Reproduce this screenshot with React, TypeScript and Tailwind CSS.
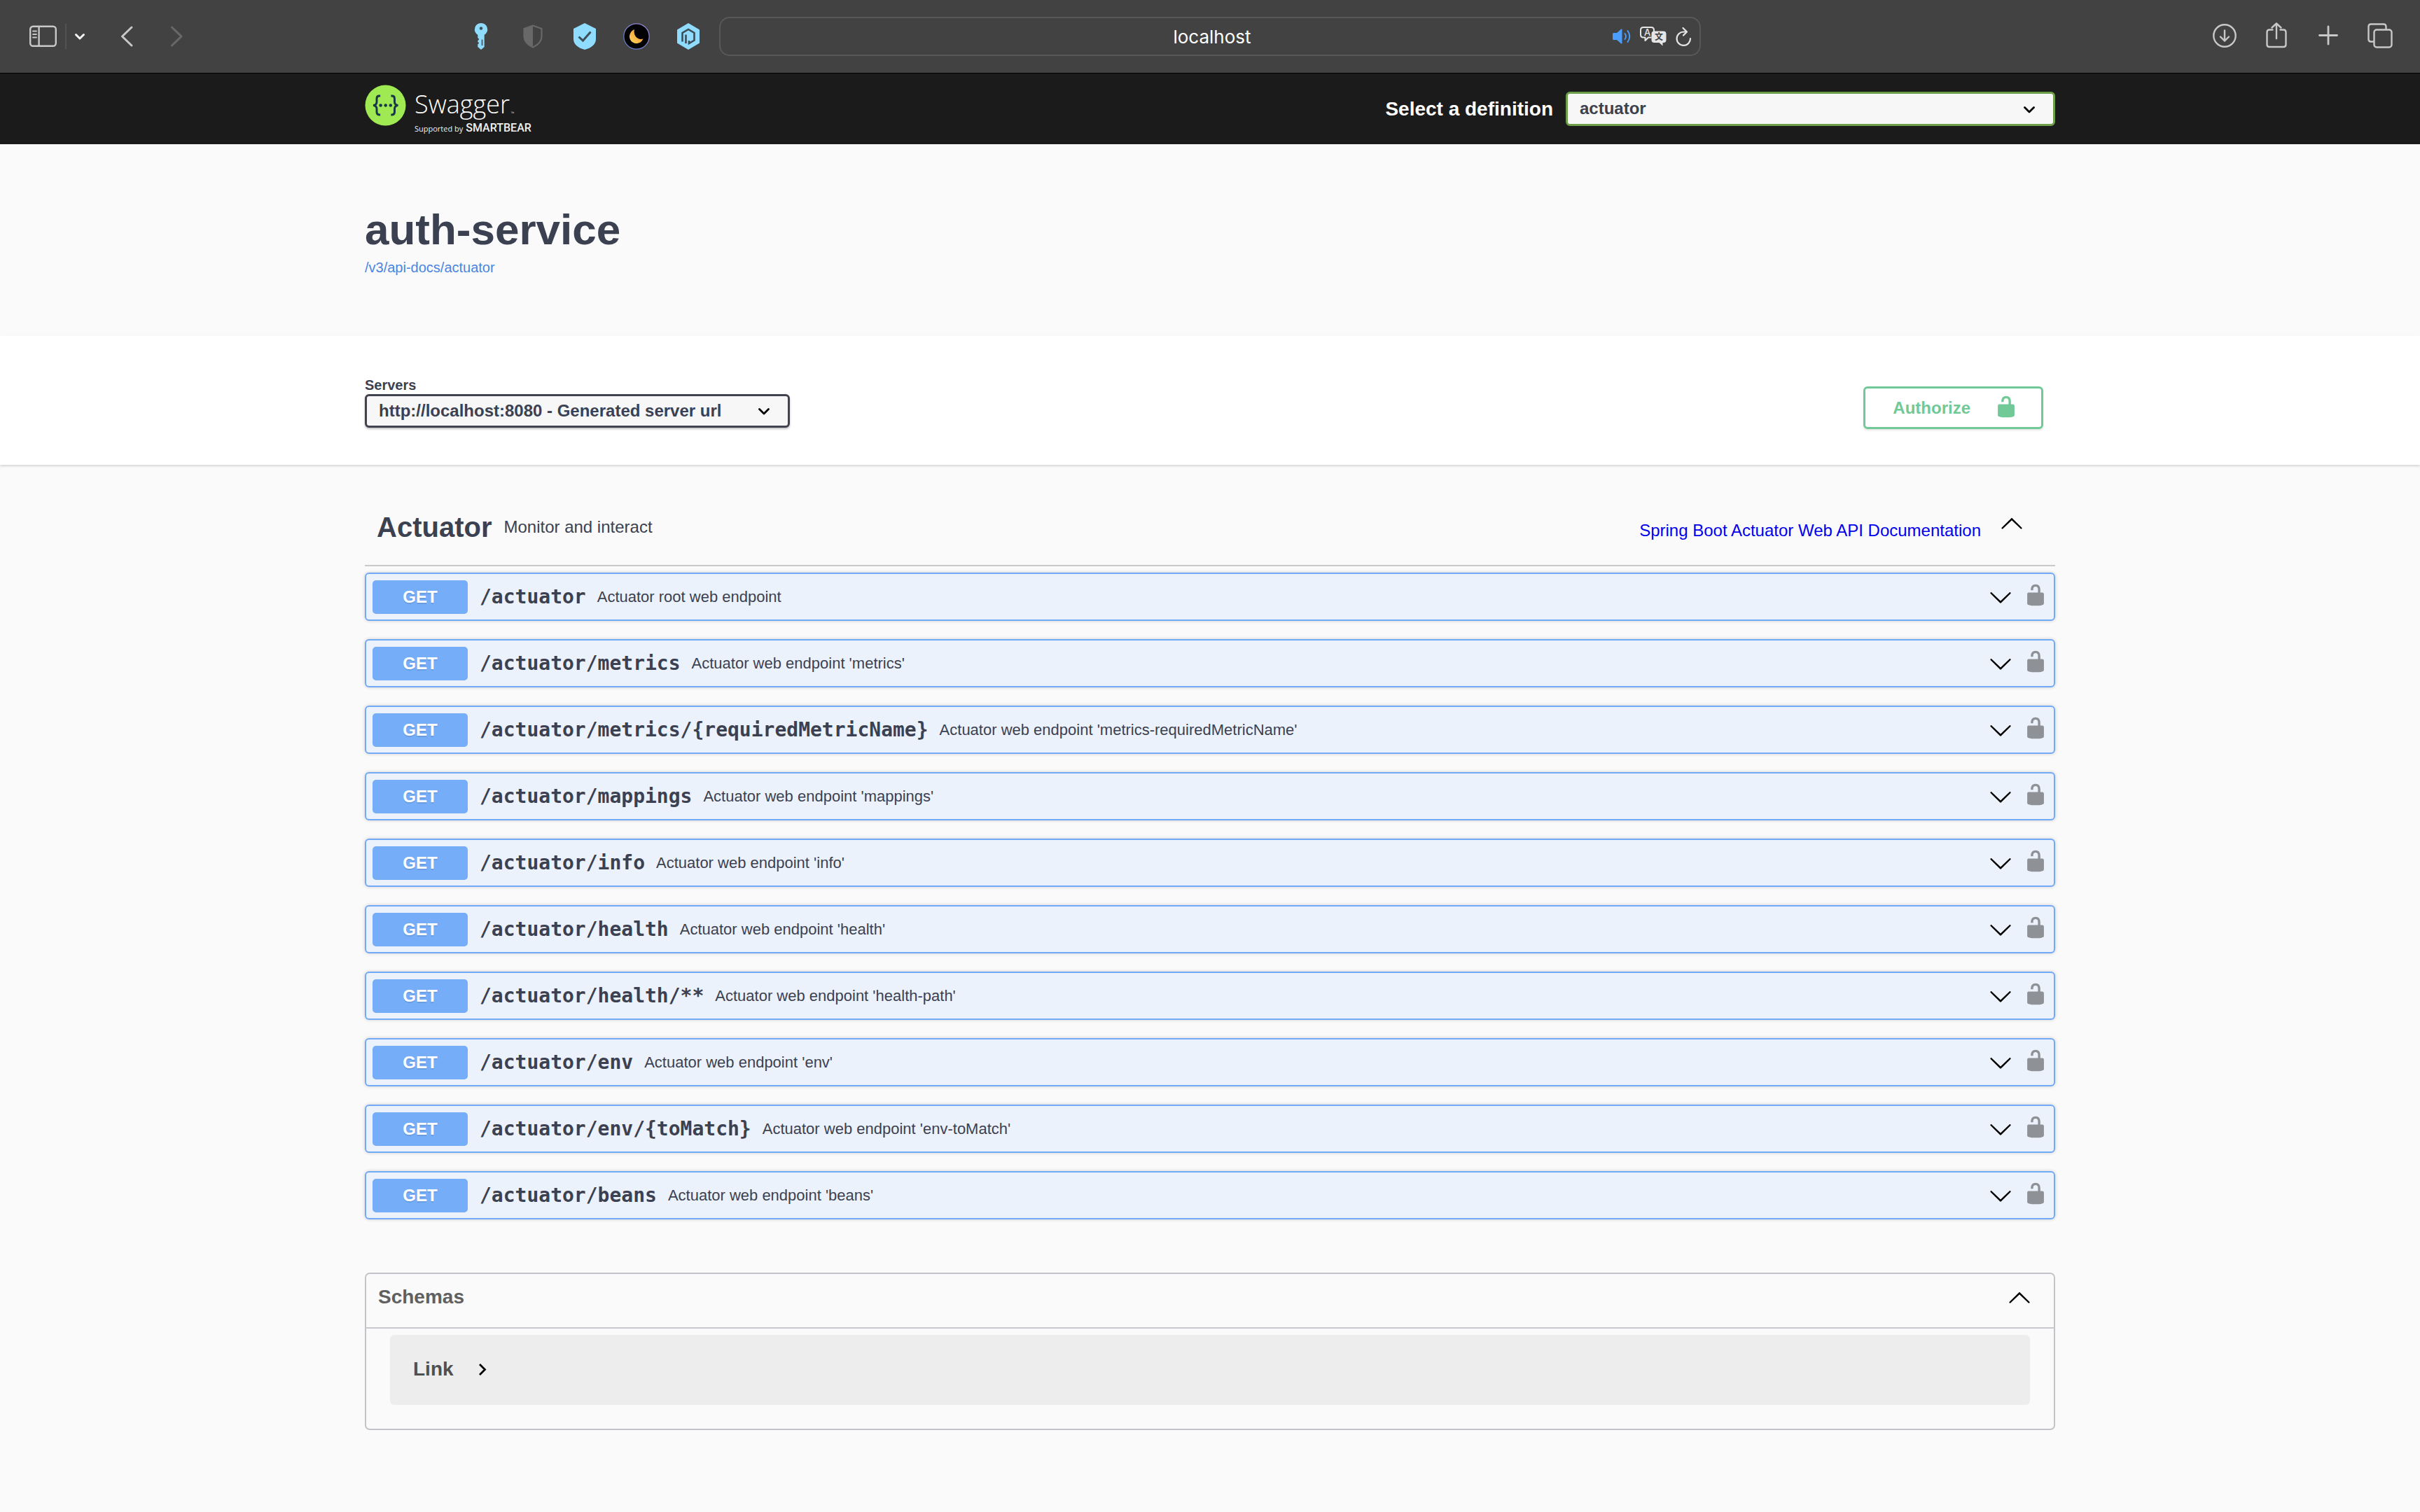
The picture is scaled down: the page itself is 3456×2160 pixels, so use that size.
import type { ReactNode } from 'react';

type Endpoint = { path: string; summary: string };

const endpoints: Endpoint[] = [
  { path: '/actuator', summary: 'Actuator root web endpoint' },
  { path: '/actuator/metrics', summary: "Actuator web endpoint 'metrics'" },
  { path: '/actuator/metrics/{requiredMetricName}', summary: "Actuator web endpoint 'metrics-requiredMetricName'" },
  { path: '/actuator/mappings', summary: "Actuator web endpoint 'mappings'" },
  { path: '/actuator/info', summary: "Actuator web endpoint 'info'" },
  { path: '/actuator/health', summary: "Actuator web endpoint 'health'" },
  { path: '/actuator/health/**', summary: "Actuator web endpoint 'health-path'" },
  { path: '/actuator/env', summary: "Actuator web endpoint 'env'" },
  { path: '/actuator/env/{toMatch}', summary: "Actuator web endpoint 'env-toMatch'" },
  { path: '/actuator/beans', summary: "Actuator web endpoint 'beans'" },
];

function Container({ className = '', children }: { className?: string; children: ReactNode }) {
  return <div className={`mx-auto w-full max-w-[2482px] px-[34px] ${className}`}>{children}</div>;
}

function ArrowDown() {
  return (
    <svg className="size-[34px] shrink-0" viewBox="0 0 20 20" fill="#000" aria-hidden="true">
      <path d="M17.418 6.109c.272-.268.709-.268.979 0s.271.701 0 .969l-7.908 7.83c-.27.268-.707.268-.979 0l-7.908-7.83c-.27-.268-.27-.701 0-.969.271-.268.709-.268.979 0L10 13.25l7.418-7.141z" />
    </svg>
  );
}

function ArrowUp() {
  return (
    <svg className="size-[34px] shrink-0" viewBox="0 0 20 20" fill="#000" aria-hidden="true">
      <path d="M17.418 14.908c.272.268.709.268.979 0s.271-.701 0-.969l-7.908-7.83c-.27-.268-.707-.268-.979 0l-7.908 7.83c-.27.268-.27.701 0 .969.271.268.709.268.979 0L10 7.767l7.418 7.141z" />
    </svg>
  );
}

function Unlocked() {
  return (
    <svg className="size-[34px] shrink-0" viewBox="0 0 20 20" fill="currentColor" aria-hidden="true">
      <path d="M15.8 8H14V5.6C14 2.703 12.665 1 10 1 7.334 1 6 2.703 6 5.6V6h2v-.801C8 3.754 8.797 3 10 3c1.203 0 2 .754 2 2.199V8H4c-.553 0-1 .646-1 1.199V17c0 .549.428 1.139.951 1.307l1.197.387C5.672 18.861 6.55 19 7.1 19h5.8c.549 0 1.428-.139 1.951-.307l1.196-.387c.524-.167.953-.757.953-1.306V9.199C17 8.646 16.352 8 15.8 8z" />
    </svg>
  );
}

function SelectArrow() {
  return (
    <svg
      className="pointer-events-none absolute top-1/2 right-[28px] -mt-1 h-[10px] w-[18px]"
      viewBox="0 0 18 10"
      fill="none"
      stroke="#000"
      strokeWidth="2.8"
      aria-hidden="true"
    >
      <path d="M2.500 1.500L9 8l6.500-6.500" strokeLinejoin="round" strokeLinecap="round" />
    </svg>
  );
}

function BrowserBar() {
  return (
    <div className="grid h-[105px] grid-cols-[1fr_minmax(0,1402px)_1fr] items-center border-b border-black bg-[#424242] text-[#c8c8c8]">
      <div className="flex items-center pr-6 pl-[41px]">
        <button aria-label="Show sidebar">
          <svg className="h-8 w-[42px]" viewBox="0 0 42 32" fill="none" stroke="currentColor" strokeWidth="2.4">
            <rect x="2.2" y="1.8" width="36.6" height="28" rx="4" />
            <path d="M14.6 2v28" />
            <path d="M6 8.5h5M6 13h5M6 17.5h5" strokeWidth="1.8" strokeLinecap="round" />
          </svg>
        </button>
        <span className="ml-2.5 h-9 w-0.5 bg-[#525252]" />
        <button aria-label="Tab groups" className="ml-2.5">
          <svg className="h-[14px] w-[18px]" viewBox="0 0 18 14" fill="none" stroke="#f4f4f4" strokeWidth="3" strokeLinecap="round" strokeLinejoin="round">
            <path d="M3.5 4.5l5.5 5.5 5.5-5.5" />
          </svg>
        </button>
        <button aria-label="Back" className="ml-12">
          <svg className="h-[34px] w-[22px]" viewBox="0 0 22 34" fill="none" stroke="currentColor" strokeWidth="3" strokeLinecap="round" strokeLinejoin="round">
            <path d="M17 4L3.500 17l13.500 13" />
          </svg>
        </button>
        <button aria-label="Forward" className="ml-12 text-[#686868]">
          <svg className="h-[34px] w-[22px]" viewBox="0 0 22 34" fill="none" stroke="currentColor" strokeWidth="3" strokeLinecap="round" strokeLinejoin="round">
            <path d="M4.500 4L18 17 4.500 30" />
          </svg>
        </button>
        <div className="ml-auto flex items-center gap-[34px]">
          <button aria-label="Passwords">
            <svg className="size-10" viewBox="0 0 40 40">
              <path d="M20 1a9 9 0 0 0-4.700 16.700V22l2 2-2 2.200v1.600l2 1.700-2 1.800V35l4.700 4 4.700-4V17.700A9 9 0 0 0 20 1z" fill="#8fdcff" />
              <circle cx="20" cy="8.500" r="2.200" fill="#3d4f58" />
              <path d="M21.500 24.500v8.500" stroke="#3d4f58" strokeWidth="1.600" />
            </svg>
          </button>
          <button aria-label="Privacy report">
            <svg className="size-10" viewBox="0 0 40 40">
              <path d="M20 4.500l12.500 4.500v11c0 7.500-5 12-12.500 15.500C12.500 32 7.500 27.500 7.500 20V9z" fill="none" stroke="#686868" strokeWidth="2.200" strokeLinejoin="round" />
              <path d="M20 4v32C12.500 32.500 7 27.500 7 20V9z" fill="#686868" />
            </svg>
          </button>
          <button aria-label="Protection">
            <svg className="size-10" viewBox="0 0 40 40">
              <path d="M20 1l16 8v15c0 8-8 13-16 15C12 37 4 32 4 24V9z" fill="#8fdcff" />
              <path d="M11.500 20.500l6 5.500 11-12.500" fill="none" stroke="#3f4f57" strokeWidth="3" />
            </svg>
          </button>
          <button aria-label="Night mode">
            <svg className="size-10" viewBox="0 0 40 40">
              <defs>
                <linearGradient id="ring" x1="0" y1="1" x2="1" y2="0">
                  <stop offset="0" stopColor="#5f7fd0" />
                  <stop offset="1" stopColor="#a78bdc" />
                </linearGradient>
                <linearGradient id="moon" x1="0" y1="1" x2="1" y2="0">
                  <stop offset="0" stopColor="#ffd75e" />
                  <stop offset="1" stopColor="#ef8b2c" />
                </linearGradient>
              </defs>
              <circle cx="20" cy="20" r="18.200" fill="#020204" stroke="url(#ring)" strokeWidth="1.200" />
              <path d="M17 10c-6 2.500-8.500 9-6 14.500 3.500 7.500 15 7.500 18.500-1-8 2.500-14.500-5-12.500-13.500z" fill="url(#moon)" />
            </svg>
          </button>
          <button aria-label="Extension">
            <svg className="size-10" viewBox="0 0 40 40">
              <path d="M20 1l16 9.500v19L20 39 4 29.500v-19z" fill="#8fdcff" />
              <path d="M11.500 27.500V15l8.500-5 8.500 5v10.500l-7.500 4.500v-4" fill="none" stroke="#3c4d58" strokeWidth="2.600" />
              <path d="M16.500 17.500v12.500" stroke="#3c4d58" strokeWidth="2.600" />
            </svg>
          </button>
        </div>
      </div>

      <div className="flex h-14 items-center rounded-[15px] border-2 border-[#585858] pr-2.5 pl-[132px]">
        <input
          aria-label="Address"
          defaultValue="localhost"
          className="min-w-0 flex-1 bg-transparent pt-0.5 text-center font-[Inter,sans-serif] text-[26px] leading-8 text-white outline-none"
        />
        <div className="flex items-center gap-2.5">
          <button aria-label="Mute tab">
            <svg className="h-[26px] w-[30px]" viewBox="0 0 30 26">
              <path d="M2 9.500q0-1.500 1.500-1.500H8l6-5.300q1.500-1 1.500.8v19q0 1.800-1.500.8L8 18H3.500Q2 18 2 16.500z" fill="#4c9dfc" />
              <path d="M19.500 9q3 4 0 8M23.500 5q5.500 8 0 16" fill="none" stroke="#4c9dfc" strokeWidth="1.900" strokeLinecap="round" />
            </svg>
          </button>
          <button aria-label="Translate">
            <svg className="h-[30px] w-10" viewBox="0 0 40 30">
              <path d="M17.500 16.500H13l-4.500 4.500v-4.500H6q-4 0-4-4V6q0-4 4-4h11q4 0 4 4v2" fill="none" stroke="#e6e6e6" strokeWidth="2" strokeLinejoin="round" />
              <path d="M21.500 7.500h13q4 0 4 4V20q0 4-4 4H33.500v4.500L28.500 24h-7q-4 0-4-4v-8.500q0-4 4-4z" fill="#e6e6e6" />
              <text x="11.500" y="14" textAnchor="middle" fontSize="13" fontWeight="500" fill="#e6e6e6" fontFamily="Inter, sans-serif">A</text>
              <text x="28" y="20" textAnchor="middle" fontSize="12" fontWeight="700" fill="#404040" fontFamily="'Noto Sans CJK SC', sans-serif">文</text>
            </svg>
          </button>
          <button aria-label="Reload">
            <svg className="h-7 w-[26px]" viewBox="0 0 26 28" fill="none" stroke="#e6e6e6" strokeWidth="2.200" strokeLinecap="round" strokeLinejoin="round">
              <path d="M17 7.500H13.500A9.700 9.700 0 1 0 23 17" />
              <path d="M12.500 2l5.500 5.500-5 5" />
            </svg>
          </button>
        </div>
      </div>

      <div className="flex items-center justify-end gap-[34px] pr-[37px]">
        <button aria-label="Downloads">
          <svg className="size-10" viewBox="0 0 40 40" fill="none" stroke="currentColor" strokeWidth="2.400" strokeLinecap="round" strokeLinejoin="round">
            <circle cx="20" cy="19" r="15.700" />
            <path d="M20 11.500v15M14 20.500l6 6 6-6" />
          </svg>
        </button>
        <button aria-label="Share">
          <svg className="size-10" viewBox="0 0 40 40" fill="none" stroke="currentColor" strokeWidth="2.400" strokeLinecap="round" strokeLinejoin="round">
            <path d="M14.500 10.500h-4.500q-3.500 0-3.500 3.500v17.500q0 3.500 3.500 3.500h20q3.500 0 3.500-3.500V14q0-3.500-3.500-3.500h-4.500" />
            <path d="M20 23V1.500M13.500 7.500L20 1.500l6.500 6" />
          </svg>
        </button>
        <button aria-label="New tab">
          <svg className="size-10" viewBox="0 0 40 40" fill="none" stroke="currentColor" strokeWidth="2.800" strokeLinecap="round">
            <path d="M20 6v25M7.500 18.500h25" />
          </svg>
        </button>
        <button aria-label="Tab overview">
          <svg className="size-10" viewBox="0 0 40 40" fill="none" stroke="currentColor" strokeWidth="2.400" strokeLinejoin="round">
            <rect x="11.500" y="10.500" width="25" height="25" rx="3.500" />
            <path d="M11.500 27.500H7q-3.500 0-3.500-3.500V6Q3.500 2.500 7 2.500h18q3.500 0 3.500 3.500v4.500" />
          </svg>
        </button>
      </div>
    </div>
  );
}

function SwaggerLogo() {
  return (
    <a href="#" aria-label="Swagger" className="flex items-start gap-3 text-white">
      <svg className="size-[59px]" viewBox="0 0 60 60" aria-hidden="true">
        <circle cx="30" cy="30" r="29.500" fill="#9fe953" />
        <g fill="none" stroke="#173647" strokeWidth="3">
          <path d="M22.500 16.300h-1.500c-2.700 0-3.700 1.500-3.700 4v4.500c0 3.400-1.300 4.800-5 5.200 3.700.4 5 1.800 5 5.200v4.500c0 2.500 1 4 3.700 4h1.500" />
          <path d="M38 16.300h1.500c2.700 0 3.700 1.500 3.700 4v4.500c0 3.400 1.300 4.800 5 5.200-3.700.4-5 1.800-5 5.200v4.500c0 2.500-1 4-3.700 4h-1.500" />
        </g>
        <g fill="#173647">
          <circle cx="23" cy="30" r="2.300" />
          <circle cx="30.200" cy="30" r="2.300" />
          <circle cx="37.400" cy="30" r="2.300" />
        </g>
      </svg>
      <span className="flex flex-col pt-2">
        <span className="flex items-end font-['Open_Sans',sans-serif] text-[36px] leading-10 font-light">
          Swagger<span className="pl-0.5 text-[6px] leading-[14px]">™</span>
        </span>
        <span className="flex items-baseline gap-1 pt-1 text-[#f0f0f0]">
          <span className="font-['Open_Sans',sans-serif] text-[11px] leading-5">Supported by</span>
          <span className="font-[Roboto,sans-serif] text-[16px] leading-5 font-medium">SMARTBEAR</span>
        </span>
      </span>
    </a>
  );
}

function EndpointRow({ path, summary }: Endpoint) {
  return (
    <li className="flex items-center gap-4 rounded-[6px] border-2 border-[#73aaf8] bg-[#ecf2fb] px-[9px] pt-[9px] pb-2 shadow-[0_0_5px_rgba(0,0,0,0.19)]">
      <button className="flex h-12 min-w-0 flex-1 items-center text-left">
        <span className="flex h-12 w-[136px] shrink-0 items-center justify-center rounded-[5px] bg-[#75adf8] text-[24px] font-bold text-white [text-shadow:0_2px_0_rgba(0,0,0,0.1)]">
          GET
        </span>
        <span className="pl-[17px] font-['DejaVu_Sans_Mono',monospace] text-[28px] leading-9 font-bold">{path}</span>
        <span className="flex-1 pl-4 text-[22px] leading-8">{summary}</span>
        <ArrowDown />
      </button>
      <button aria-label={`Authorize ${path}`} className="mb-1.5 text-[#8e9196]">
        <Unlocked />
      </button>
    </li>
  );
}

export default function App() {
  return (
    <div className="min-h-screen bg-[#fafafa] font-['Liberation_Sans',Arial,sans-serif] text-[#3b4151]">
      <BrowserBar />

      <header className="bg-[#1b1b1b]">
        <Container className="flex h-[101px] items-start justify-between pt-4">
          <SwaggerLogo />
          <div className="flex items-center gap-[18px] pt-2.5">
            <label htmlFor="definition" className="text-[28px] leading-[49px] font-bold text-white">
              Select a definition
            </label>
            <div className="relative">
              <select
                id="definition"
                className="block h-[49px] w-[699px] appearance-none rounded-[6px] border-3 border-[#6d9f4b] bg-[#f7f7f7] pb-0.5 pl-[17px] text-[24px] font-bold"
              >
                <option>actuator</option>
              </select>
              <SelectArrow />
            </div>
          </div>
        </Container>
      </header>

      <Container className="pt-[90px] pb-[86px]">
        <h1 className="text-[62px] leading-[64px] font-bold">auth-service</h1>
        <a href="#" className="mt-2.5 block w-fit text-[20px] leading-6 text-[#4a86e0]">
          /v3/api-docs/actuator
        </a>
      </Container>

      <section className="bg-white shadow-[0_2px_3px_rgba(0,0,0,0.15)]">
        <Container className="flex items-end justify-between pt-[58px] pb-[51px]">
          <div className="pb-0.5">
            <label htmlFor="servers" className="block text-[20px] leading-[25px] font-bold">
              Servers
            </label>
            <div className="relative">
              <select
                id="servers"
                className="block h-12 w-[607px] appearance-none rounded-[6px] border-3 border-[#41444e] bg-[#f7f7f7] pl-[17px] text-[24px] font-bold shadow-[0_2px_3px_rgba(0,0,0,0.25)]"
              >
                <option>http://localhost:8080 - Generated server url</option>
              </select>
              <SelectArrow />
            </div>
          </div>
          <button className="mr-[17px] flex h-[61px] items-center gap-[34px] rounded-[6px] border-3 border-[#70c997] pr-[33px] pl-[39px] text-[24px] font-bold text-[#70c997] shadow-[0_2px_3px_rgba(0,0,0,0.1)]">
            Authorize
            <span className="mb-1">
              <Unlocked />
            </span>
          </button>
        </Container>
      </section>

      <Container className="pt-[35px]">
        <div className="flex h-[110px] items-center border-b-2 border-[#c8c8cd] pr-[45px] pl-[17px]">
          <h2 className="text-[40px] leading-[48px] font-bold">Actuator</h2>
          <p className="flex-1 pl-[17px] text-[24px] leading-8">Monitor and interact</p>
          <a href="#" className="mt-2.5 text-[24px] leading-8 text-[#0000ee]">
            Spring Boot Actuator Web API Documentation
          </a>
          <button aria-label="Collapse operations" className="mb-3 ml-[27px]">
            <ArrowUp />
          </button>
        </div>
        <ul className="flex flex-col gap-[26px] pt-[9px]">
          {endpoints.map((e) => (
            <EndpointRow key={e.path} {...e} />
          ))}
        </ul>

        <section className="mt-[76px] rounded-[7px] border-2 border-[#c3c3c9]">
          <button className="flex w-full items-center justify-between border-b-2 border-[#c8c8cd] pt-4 pr-8 pb-[26px] pl-[17px] text-left text-[28px] leading-[34px] font-bold text-[#606060]">
            Schemas
            <ArrowUp />
          </button>
          <div className="mx-[34px] mt-[9px] mb-[34px] rounded-[6px] bg-[#ededed] px-[33px] pt-8 pb-[34px]">
            <button className="flex items-center gap-[34px] text-[28px] leading-[34px] font-bold text-[#505050]">
              Link
              <svg className="h-[18px] w-[14px]" viewBox="0 0 14 18" fill="none" stroke="#000" strokeWidth="2.800" aria-hidden="true">
                <path d="M3 2l7.500 7.500L3 17" />
              </svg>
            </button>
          </div>
        </section>
      </Container>
    </div>
  );
}
